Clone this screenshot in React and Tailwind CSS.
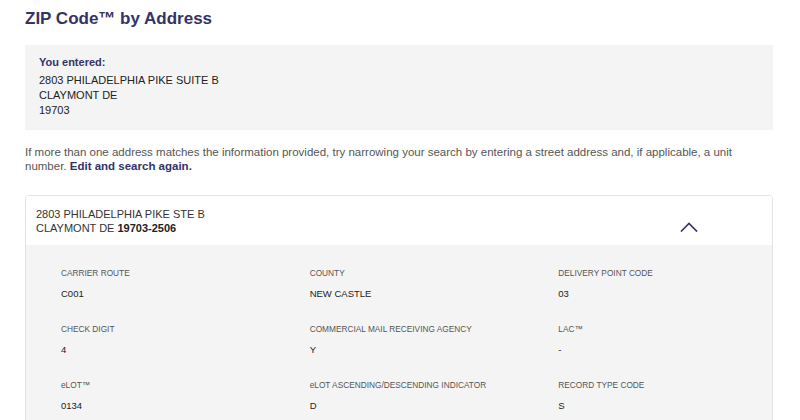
const details = [
  { label: 'CARRIER ROUTE', value: 'C001' },
  { label: 'COUNTY', value: 'NEW CASTLE' },
  { label: 'DELIVERY POINT CODE', value: '03' },
  { label: 'CHECK DIGIT', value: '4' },
  { label: 'COMMERCIAL MAIL RECEIVING AGENCY', value: 'Y' },
  { label: 'LAC™', value: '-' },
  { label: 'eLOT™', value: '0134' },
  { label: 'eLOT ASCENDING/DESCENDING INDICATOR', value: 'D' },
  { label: 'RECORD TYPE CODE', value: 'S' },
]

function IconChevronUp() {
  return (
    <svg width="18" height="10" viewBox="0 0 18 10" fill="none"
      stroke="#333366" strokeWidth="1.6" strokeLinecap="square" aria-hidden="true">
      <path d="M1.5 9 L9 1.5 L16.5 9" />
    </svg>
  )
}

export default function App() {
  return (
    <div className="w-[800px] h-[420px] overflow-hidden bg-white font-['Liberation_Sans',Arial,sans-serif]">
      <div className="px-[25px] pt-[9px] w-[773px] box-content">
        {/* Title */}
        <h1 className="text-[17px] leading-[20px] font-bold text-[#333366]">
          ZIP Code™ by Address
        </h1>

        {/* What the user typed */}
        <div className="mt-[16px] bg-[#f4f4f4] px-[14px] pt-[10px] pb-[12px] w-[748px]">
          <p className="text-[11px] leading-[15px] font-bold text-[#333366]">You entered:</p>
          <div className="mt-[3px] text-[11px] leading-[15px] text-[#222]">
            <p>2803 PHILADELPHIA PIKE SUITE B</p>
            <p>CLAYMONT DE</p>
            <p>19703</p>
          </div>
        </div>

        {/* Hint */}
        <p className="mt-[16px] text-[11.5px] leading-[13.5px] text-[#555] w-[740px]">
          If more than one address matches the information provided, try narrowing your search by entering a street address and, if applicable, a unit number.{' '}
          <span className="font-bold text-[#333366]">Edit and search again.</span>
        </p>

        {/* Result card */}
        <div className="mt-[22px] w-[748px] border border-[#e3e3e3] rounded-[4px] overflow-hidden">
          <div className="flex items-start justify-between bg-white pl-[10px] pr-[74px] pt-[11px] pb-[10px]">
            <div className="text-[11px] leading-[14px] text-[#333]">
              <p>2803 PHILADELPHIA PIKE STE B</p>
              <p>CLAYMONT DE <span className="font-bold text-[#222]">19703-2506</span></p>
            </div>
            <div className="mt-[15px]">
              <IconChevronUp />
            </div>
          </div>

          <div className="bg-[#f4f4f4] grid grid-cols-3 gap-y-[24px] pt-[23px] pb-[30px]">
            {details.map(d => (
              <div key={d.label} className="pl-[35px]">
                <p className="text-[8.3px] leading-[10px] text-[#555]">{d.label}</p>
                <p className="mt-[10px] text-[9.5px] leading-[12px] text-[#222]">{d.value}</p>
              </div>
            ))}
          </div>
        </div>
      </div>
    </div>
  )
}
